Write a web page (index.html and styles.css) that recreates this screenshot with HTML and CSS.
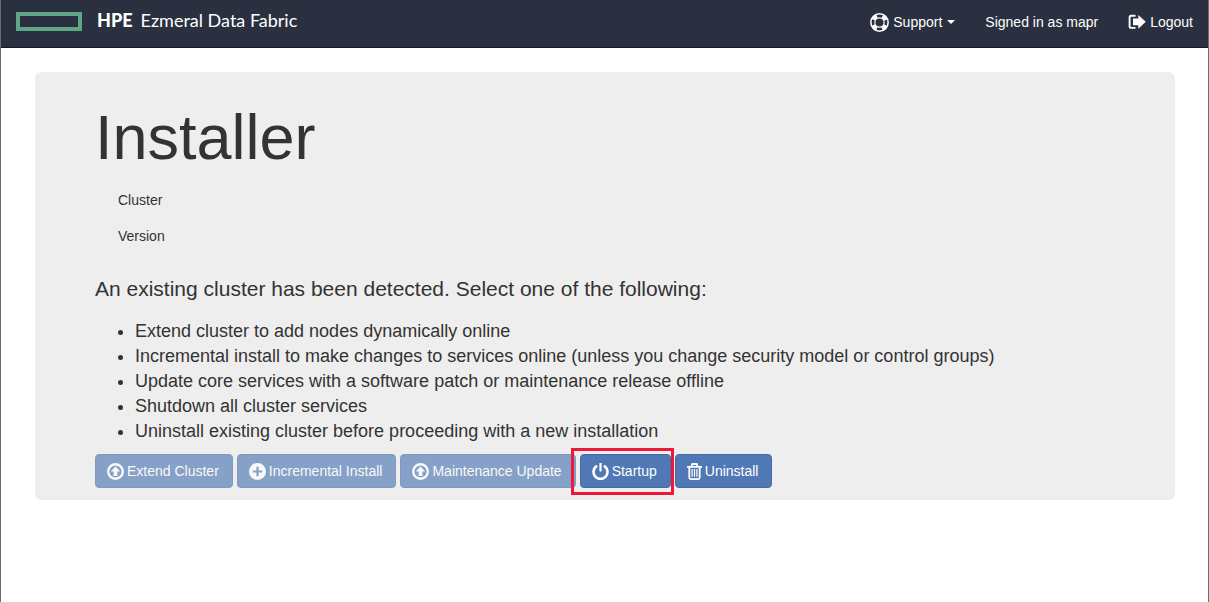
FILE: index.html
```html
<!DOCTYPE html>
<html lang="en">
<head>
<meta charset="utf-8">
<meta name="viewport" content="width=device-width, initial-scale=1">
<title>HPE Ezmeral Data Fabric Installer</title>
<link rel="stylesheet" href="styles.css">
</head>
<body>
<header class="navbar">
  <a class="brand" href="#">
    <span class="brand-mark"></span>
    <span class="brand-name"><strong>HPE</strong> <span>Ezmeral Data Fabric</span></span>
  </a>
  <nav class="nav">
    <button class="nav-item" type="button">
      <svg class="icon-ring" viewBox="0 0 20 20" aria-hidden="true">
        <circle cx="10" cy="10" r="9.1" fill="none" stroke="#fff" stroke-width="1.6"/>
        <circle cx="10" cy="10" r="4.9" fill="none" stroke="#fff" stroke-width="1.2"/>
        <circle cx="10" cy="10" r="7" fill="none" stroke="#fff" stroke-width="4.2" stroke-dasharray="5.4 5.596" stroke-dashoffset="-2.798"/>
      </svg>
      <span>Support</span>
      <span class="caret"></span>
    </button>
    <span class="nav-text">Signed in as mapr</span>
    <a class="nav-item" href="#">
      <svg class="icon-logout" viewBox="0 0 18 16" aria-hidden="true">
        <path d="M7.5 1.8H3.2Q1.6 1.8 1.6 3.4V12.3Q1.6 13.9 3.2 13.9H7.5" fill="none" stroke="#fff" stroke-width="1.9"/>
        <path d="M5 4.4H10.3V1L17.8 7.8L10.3 14.8V11.2H5Z" fill="#fff"/>
      </svg>
      <span>Logout</span>
    </a>
  </nav>
</header>
<main class="content">
  <section class="panel">
    <h1>Installer</h1>
    <dl class="details">
      <dt>Cluster</dt>
      <dt>Version</dt>
    </dl>
    <p class="lead">An existing cluster has been detected. Select one of the following:</p>
    <ul class="options">
      <li>Extend cluster to add nodes dynamically online</li>
      <li>Incremental install to make changes to services online (unless you change security model or control groups)</li>
      <li>Update core services with a software patch or maintenance release offline</li>
      <li>Shutdown all cluster services</li>
      <li>Uninstall existing cluster before proceeding with a new installation</li>
    </ul>
    <div class="actions">
      <button class="btn" type="button" disabled>
        <svg class="icon" viewBox="0 0 17 17" aria-hidden="true"><circle cx="8.5" cy="8.5" r="7.3" fill="none" stroke="#fff" stroke-width="2.4"/><path d="M8.5 3.4L13.2 8.5H10.4V13H6.6V8.5H3.8Z" fill="#fff"/></svg>
        Extend Cluster
      </button>
      <button class="btn" type="button" disabled>
        <svg class="icon" viewBox="0 0 17 17" aria-hidden="true"><path fill="#fff" fill-rule="evenodd" d="M8.5 0A8.5 8.5 0 1 1 8.5 17A8.5 8.5 0 1 1 8.5 0ZM7.4 3.8V7.4H3.8V9.6H7.4V13.2H9.6V9.6H13.2V7.4H9.6V3.8Z"/></svg>
        Incremental Install
      </button>
      <button class="btn" type="button" disabled>
        <svg class="icon" viewBox="0 0 17 17" aria-hidden="true"><circle cx="8.5" cy="8.5" r="7.3" fill="none" stroke="#fff" stroke-width="2.4"/><path d="M8.5 3.4L13.2 8.5H10.4V13H6.6V8.5H3.8Z" fill="#fff"/></svg>
        Maintenance Update
      </button>
      <button class="btn btn-marked" type="button">
        <svg class="icon" viewBox="0 0 17 17" aria-hidden="true"><path d="M4.2 3.4A7 7 0 1 0 12.8 3.4" fill="none" stroke="#fff" stroke-width="2.6" stroke-linecap="round"/><path d="M8.5 0.6V7.6" fill="none" stroke="#fff" stroke-width="2.2" stroke-linecap="round"/></svg>
        Startup
      </button>
      <button class="btn" type="button">
        <svg class="icon icon-trash" viewBox="0 0 15 17" aria-hidden="true"><g fill="none" stroke="#fff" stroke-width="1.8"><path d="M0 3.8H15M4.5 3.4L5.3 1H9.7L10.5 3.4M2.3 4V14.6Q2.3 16.1 3.8 16.1H11.2Q12.7 16.1 12.7 14.6V4"/><path d="M5.1 6V13.8M7.5 6V13.8M9.9 6V13.8" stroke-width="1.2"/></g></svg>
        Uninstall
      </button>
    </div>
  </section>
</main>
</body>
</html>
```
FILE: styles.css
```css
* {
  box-sizing: border-box;
}

body {
  margin: 0;
  min-height: 100vh;
  border: 0 solid #6c6c6c;
  border-width: 0 1px;
  background: #fff;
  color: #333;
  font: 14px/20px "Liberation Sans", Arial, sans-serif;
}

.navbar {
  display: flex;
  align-items: center;
  justify-content: space-between;
  height: 48px;
  padding: 0 15px;
  border-bottom: 1px solid #14172a;
  background: #2a3040;
  color: #fff;
}

.brand {
  display: flex;
  align-items: center;
  gap: 15px;
  padding-bottom: 5px;
  color: inherit;
  text-decoration: none;
}

.brand-mark {
  width: 66px;
  height: 19px;
  border: 4px solid #5fa784;
}

.brand-name {
  display: flex;
  gap: 8px;
  padding-bottom: 2px;
  font: 18px/24px Lato, sans-serif;
}

.brand-name strong {
  font-weight: 900;
}

.nav {
  display: flex;
  align-items: center;
  gap: 30px;
  padding-bottom: 3px;
}

.nav-item {
  display: flex;
  align-items: center;
  gap: 4px;
  padding: 0;
  border: 0;
  background: none;
  color: inherit;
  font: inherit;
  text-decoration: none;
}

.icon-ring {
  width: 19px;
  height: 19px;
}

.icon-logout {
  width: 18px;
  height: 16px;
}

.caret {
  border: 4px solid transparent;
  border-top-color: #fff;
  border-bottom: 0;
  margin-left: 1px;
}

.content {
  padding: 24px 33px 24px 34px;
}

.panel {
  padding: 30px 60px 12px;
  border-radius: 6px;
  background: #eee;
}

h1 {
  margin: 0 0 18px;
  font-size: 63px;
  font-weight: 400;
  line-height: 70px;
}

.details {
  display: grid;
  gap: 16px;
  margin: 0 0 28px;
  padding-left: 23px;
}

.lead {
  margin: 0 0 15px;
  font-size: 21px;
  line-height: 30px;
}

.options {
  margin: 0 0 10px;
  padding-left: 40px;
  font-size: 18px;
  line-height: 25px;
}

.actions {
  display: flex;
  flex-wrap: wrap;
  gap: 4px;
}

.btn {
  position: relative;
  display: flex;
  align-items: center;
  gap: 3px;
  padding: 6px 13px 6px 11px;
  border: 1px solid #456ca8;
  border-radius: 4px;
  background: #5078b5;
  color: #fff;
  font: inherit;
}

.btn:disabled {
  opacity: 0.65;
}

.btn-marked::after {
  content: "";
  position: absolute;
  inset: -7px -4px -8px -10px;
  border: 3px solid #f0183a;
}

.icon {
  width: 17px;
  height: 17px;
}

.icon-trash {
  width: 15px;
}
```
